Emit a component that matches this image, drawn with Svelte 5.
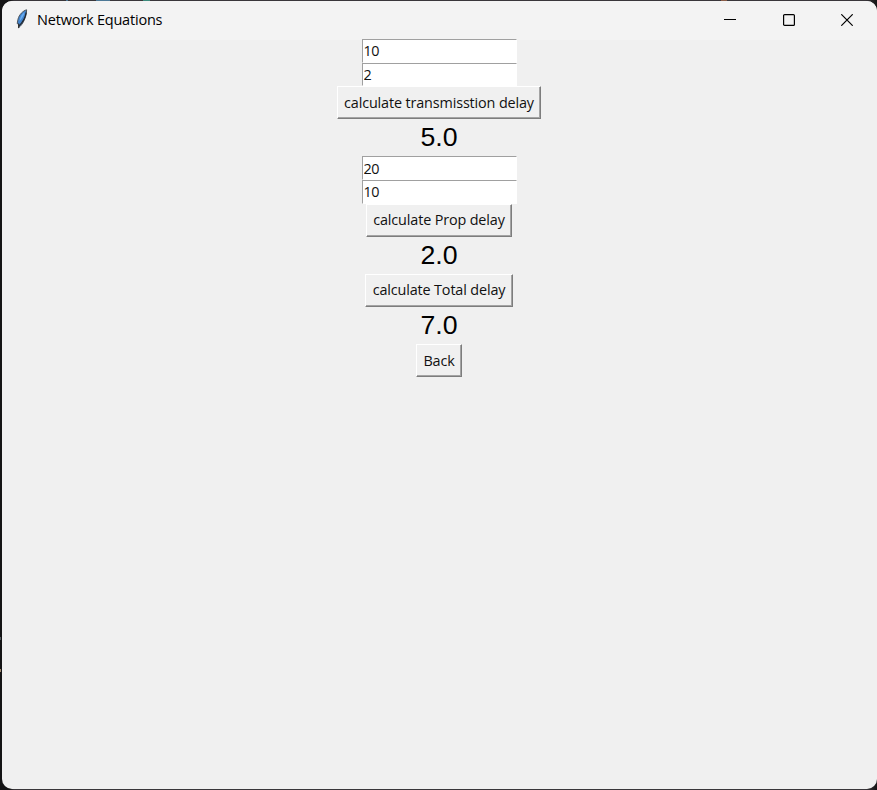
<script>
  let size = $state('10');
  let rate = $state('2');
  let distance = $state('20');
  let speed = $state('10');
  let transmission = $state('5.0');
  let propagation = $state('2.0');
  let total = $state('7.0');

  const show = (n) => (Number.isInteger(n) ? n.toFixed(1) : String(n));
  const calcTransmission = () => (transmission = show(Number(size) / Number(rate)));
  const calcPropagation = () => (propagation = show(Number(distance) / Number(speed)));
  const calcTotal = () => (total = show(Number(transmission) + Number(propagation)));
</script>

<div class="desktop">
  <main class="window">
    <header>
      <svg class="feather" width="14" height="20" viewBox="0 0 14 20">
        <path d="M11.6 .8C8.2 1.6 4 5.7 3 10.2L2.2 14.5 3.6 15.4 3.5 18.8C7.4 16 11.6 8.6 11.6 .8Z" fill="#4384cc" stroke="#4c545c" stroke-width="1" />
        <path d="M9.6 3.2C7 5 5 8 4.6 12 7.2 9.4 9 6 9.6 3.2Z" fill="#6aaef2" />
        <path d="M11.2 3.4C10.4 8.5 7.6 13.6 3.9 17" fill="none" stroke="#22272e" stroke-width="1.2" />
        <path d="M3.6 14.5V19" fill="none" stroke="#333" stroke-width="1.2" />
      </svg>
      <h1>Network Equations</h1>
      <div class="controls">
        <svg width="12" height="12" viewBox="0 0 12 12"><path d="M0 5.5H12" /></svg>
        <svg width="12" height="12" viewBox="0 0 12 12"><rect x=".6" y=".6" width="10.8" height="10.8" rx="1" /></svg>
        <svg width="12" height="12" viewBox="0 0 12 12"><path d="M.3 .3 11.7 11.7M11.7 .3 .3 11.7" /></svg>
      </div>
    </header>
    <section>
      <input bind:value={size} />
      <input bind:value={rate} />
      <button class="transmission" onclick={calcTransmission}>calculate transmisstion delay</button>
      <output>{transmission}</output>
      <input bind:value={distance} />
      <input bind:value={speed} />
      <button class="prop" onclick={calcPropagation}>calculate Prop delay</button>
      <output>{propagation}</output>
      <button class="total" onclick={calcTotal}>calculate Total delay</button>
      <output>{total}</output>
      <button class="back">Back</button>
    </section>
  </main>
</div>

<style>
  .desktop {
    box-sizing: border-box;
    width: 877px;
    height: 790px;
    padding: 1px 0 1px 2px;
    background:
      linear-gradient(#4d7896, #4d7896) 66px 0 / 2px 1px no-repeat,
      linear-gradient(#4d7896, #4d7896) 96px 0 / 14px 1px no-repeat,
      linear-gradient(#3c8a7c, #3c8a7c) 143px 0 / 7px 1px no-repeat,
      linear-gradient(#8a5d48, #8a5d48) 721px 0 / 6px 1px no-repeat,
      linear-gradient(#a08a70, #a08a70) 0 669px / 1px 3px no-repeat,
      linear-gradient(#555b60, #555b60) 0 637px / 1px 3px no-repeat,
      linear-gradient(90deg, #141415 0, #141415 10px, #39363a 14px, #39363a 865px, #141415 877px);
    overflow: hidden;
  }
  .window {
    height: 788px;
    border-radius: 10px;
    background: #f0f0f0;
    overflow: hidden;
    color: #000;
  }
  header {
    display: flex;
    align-items: center;
    height: 39px;
    background: #f3f3f3;
  }
  .feather {
    margin: 0 8px 3px 13px;
  }
  h1 {
    margin: 0 0 2px;
    font: 400 14.5px/20px "Open Sans", sans-serif;
    letter-spacing: -0.2px;
    white-space: nowrap;
  }
  .controls {
    display: flex;
    gap: 46.5px;
    margin: 0 24px 1px auto;
  }
  .controls svg {
    fill: none;
    stroke: #000;
    stroke-width: 1.2;
  }
  section {
    display: flex;
    flex-direction: column;
    align-items: center;
    margin-top: -1px;
    padding-right: 1px;
  }
  input,
  button {
    box-sizing: border-box;
    border-radius: 0;
    font: 400 14.4px/18px "Open Sans", sans-serif;
    color: #111;
    outline: none;
  }
  input {
    width: 155px;
    height: 23.6px;
    padding: 0 1px;
    border: 0 solid;
    border-width: 1.5px 1px 1px 1.5px;
    border-color: #a0a0a0 #fff #fff #a0a0a0;
    background: #fff;
    letter-spacing: -0.5px;
  }
  button {
    height: 33px;
    padding: 1px 0 1px;
    border: 1px solid;
    border-color: #fff #7d7d7d #7d7d7d #fff;
    box-shadow: inset -1px -1px #a4a4a4;
    background: #f0f0f0;
    letter-spacing: -0.14px;
    white-space: nowrap;
  }
  .transmission {
    width: 204px;
  }
  .prop {
    width: 146px;
  }
  .total {
    width: 148px;
  }
  .back {
    width: 46px;
  }
  output {
    height: 37.3px;
    font: 26.7px/37px "Liberation Sans", Arial, sans-serif;
  }
</style>
